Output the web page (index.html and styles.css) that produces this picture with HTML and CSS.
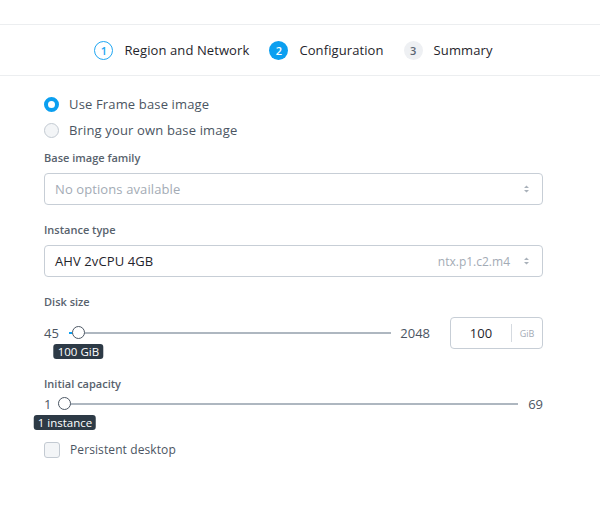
FILE: index.html
```html
<!DOCTYPE html>
<html>
<head>
<meta charset="utf-8">
<link rel="stylesheet" href="styles.css">
</head>
<body>
<div class="page">
  <div class="steps-bar">
    <div class="steps">
      <div class="step">
        <span class="step-num step-done">1</span>
        <span class="step-label">Region and Network</span>
      </div>
      <div class="step">
        <span class="step-num step-active">2</span>
        <span class="step-label">Configuration</span>
      </div>
      <div class="step">
        <span class="step-num step-todo">3</span>
        <span class="step-label">Summary</span>
      </div>
    </div>
  </div>

  <div class="form">
    <div class="radios">
      <label class="radio-row">
        <span class="radio radio-on"></span>
        <span class="radio-label">Use Frame base image</span>
      </label>
      <label class="radio-row">
        <span class="radio"></span>
        <span class="radio-label">Bring your own base image</span>
      </label>
    </div>

    <div class="field-label first">Base image family</div>
    <div class="select">
      <span class="select-placeholder">No options available</span>
      <svg class="select-arrows" width="7" height="10" viewBox="0 0 7 10"><path d="M1 4 L3.5 1.5 L6 4 Z M1 6 L3.5 8.5 L6 6 Z" fill="#a9b1ba"/></svg>
    </div>

    <div class="field-label">Instance type</div>
    <div class="select">
      <span class="select-value">AHV 2vCPU 4GB</span>
      <span class="select-hint">ntx.p1.c2.m4</span>
      <svg class="select-arrows" width="7" height="10" viewBox="0 0 7 10"><path d="M1 4 L3.5 1.5 L6 4 Z M1 6 L3.5 8.5 L6 6 Z" fill="#a9b1ba"/></svg>
    </div>

    <div class="field-label">Disk size</div>
    <div class="slider-row disk">
      <span class="slider-min">45</span>
      <div class="track disk-track">
        <span class="fill" style="width:3px"></span>
        <span class="thumb" style="left:3px">
          <span class="tip">100 GiB</span>
        </span>
      </div>
      <span class="slider-max">2048</span>
      <div class="num-input">
        <span class="num-value">100</span>
        <span class="num-divider"></span>
        <span class="num-unit">GiB</span>
      </div>
    </div>

    <div class="field-label cap-label">Initial capacity</div>
    <div class="slider-row cap">
      <span class="slider-min">1</span>
      <div class="track cap-track">
        <span class="thumb" style="left:0">
          <span class="tip">1 instance</span>
        </span>
      </div>
      <span class="slider-max">69</span>
    </div>

    <label class="check-row">
      <span class="checkbox"></span>
      <span class="check-label">Persistent desktop</span>
    </label>
  </div>
</div>
</body>
</html>
```

FILE: styles.css
```css
* { box-sizing: border-box; }
html, body { margin: 0; padding: 0; background: #fff; }
body {
  font-family: "Open Sans", "Liberation Sans", sans-serif;
  color: #22272e;
}
.page { width: 609px; padding-top: 24px; }

.steps-bar {
  border-top: 1px solid #eceef0;
  border-bottom: 1px solid #eceef0;
  height: 52px;
  width: 600px;
}
.steps {
  width: 587px;
  height: 50px;
  display: flex;
  align-items: center;
  justify-content: center;
  gap: 20px;
}
.step { display: flex; align-items: center; gap: 11px; }
.step-num {
  width: 19px; height: 19px;
  border-radius: 50%;
  display: flex; align-items: center; justify-content: center;
  font-size: 11px; font-weight: 600;
  line-height: 1;
}
.step-done { border: 1.5px solid #1fa6f2; color: #1fa6f2; background: #fff; }
.step-active { background: #0b9ff0; color: #fff; }
.step-todo { background: #eef0f3; color: #5c6672; }
.step-label { font-size: 13px; color: #1f252c; letter-spacing: 0.1px; }

.form { width: 587px; padding: 15px 44px 0 44px; }
.radios { display: flex; flex-direction: column; }
.radio-row { display: flex; align-items: center; height: 26px; gap: 10px; }
.radio {
  width: 15px; height: 15px; border-radius: 50%;
  border: 1px solid #c3cad2; background: #f3f5f7;
  flex: none;
}
.radio-on { border: 4.5px solid #0b9ff0; background: #fff; }
.radio-label { font-size: 13px; color: #4b5562; letter-spacing: 0.15px; }

.field-label {
  font-size: 11px; font-weight: 600; color: #58626d;
  height: 14px; line-height: 14px;
  margin-top: 18px; margin-bottom: 8px;
}
.field-label.first { margin-top: 8px; }

.select {
  height: 32px;
  border: 1px solid #c7ced6;
  border-radius: 4px;
  display: flex; align-items: center;
  padding: 0 10px 0 10px;
  gap: 10px;
}
.select-placeholder { flex: 1; font-size: 13px; color: #a3abb5; letter-spacing: 0.1px; }
.select-value { flex: 1; font-size: 13px; color: #1f252c; letter-spacing: 0.1px; }
.select-hint { font-size: 12px; color: #a3abb5; margin-right: 3px; }
.select-arrows { flex: none; margin-right: 2px; }

.slider-row { display: flex; align-items: center; }
.slider-row.disk { height: 32px; }
.slider-min, .slider-max { font-size: 13px; color: #4b5562; }
.track {
  flex: 1; height: 2px; background: #aeb7c0; position: relative;
}
.disk-track { margin: 0 9px 0 10px; }
.cap-track { margin: 0 10px 0 7px; }
.fill { position: absolute; left: 0; top: 0; height: 2px; background: #0b9ff0; }
.thumb {
  position: absolute; top: -6px;
  width: 13px; height: 13px; border-radius: 50%;
  background: #fff; border: 1px solid #4d5865;
}
.tip {
  position: absolute;
  top: 17px; left: 50%; transform: translateX(-50%);
  background: #2d3a46; color: #fff;
  font-size: 11.5px; line-height: 15px;
  padding: 0 4px; border-radius: 3px;
  white-space: nowrap;
}
.num-input {
  margin-left: 20px;
  width: 93px; height: 32px;
  border: 1px solid #c7ced6; border-radius: 4px;
  display: flex; align-items: center;
}
.num-value { width: 60px; text-align: center; font-size: 13px; color: #1f252c; }
.num-divider { width: 1px; height: 18px; background: #d5dae0; }
.num-unit { flex: 1; text-align: center; font-size: 9px; color: #a3abb5; }

.cap-label { margin-top: 28px; margin-bottom: 5px; }
.slider-row.cap { height: 16px; }

.check-row { display: flex; align-items: center; gap: 10px; margin-top: 29px; }
.checkbox {
  width: 16px; height: 16px; border-radius: 3px;
  border: 1px solid #c3cad2; background: #f3f5f7; flex: none;
}
.check-label { font-size: 12px; color: #4b5562; letter-spacing: 0.1px; }
```
